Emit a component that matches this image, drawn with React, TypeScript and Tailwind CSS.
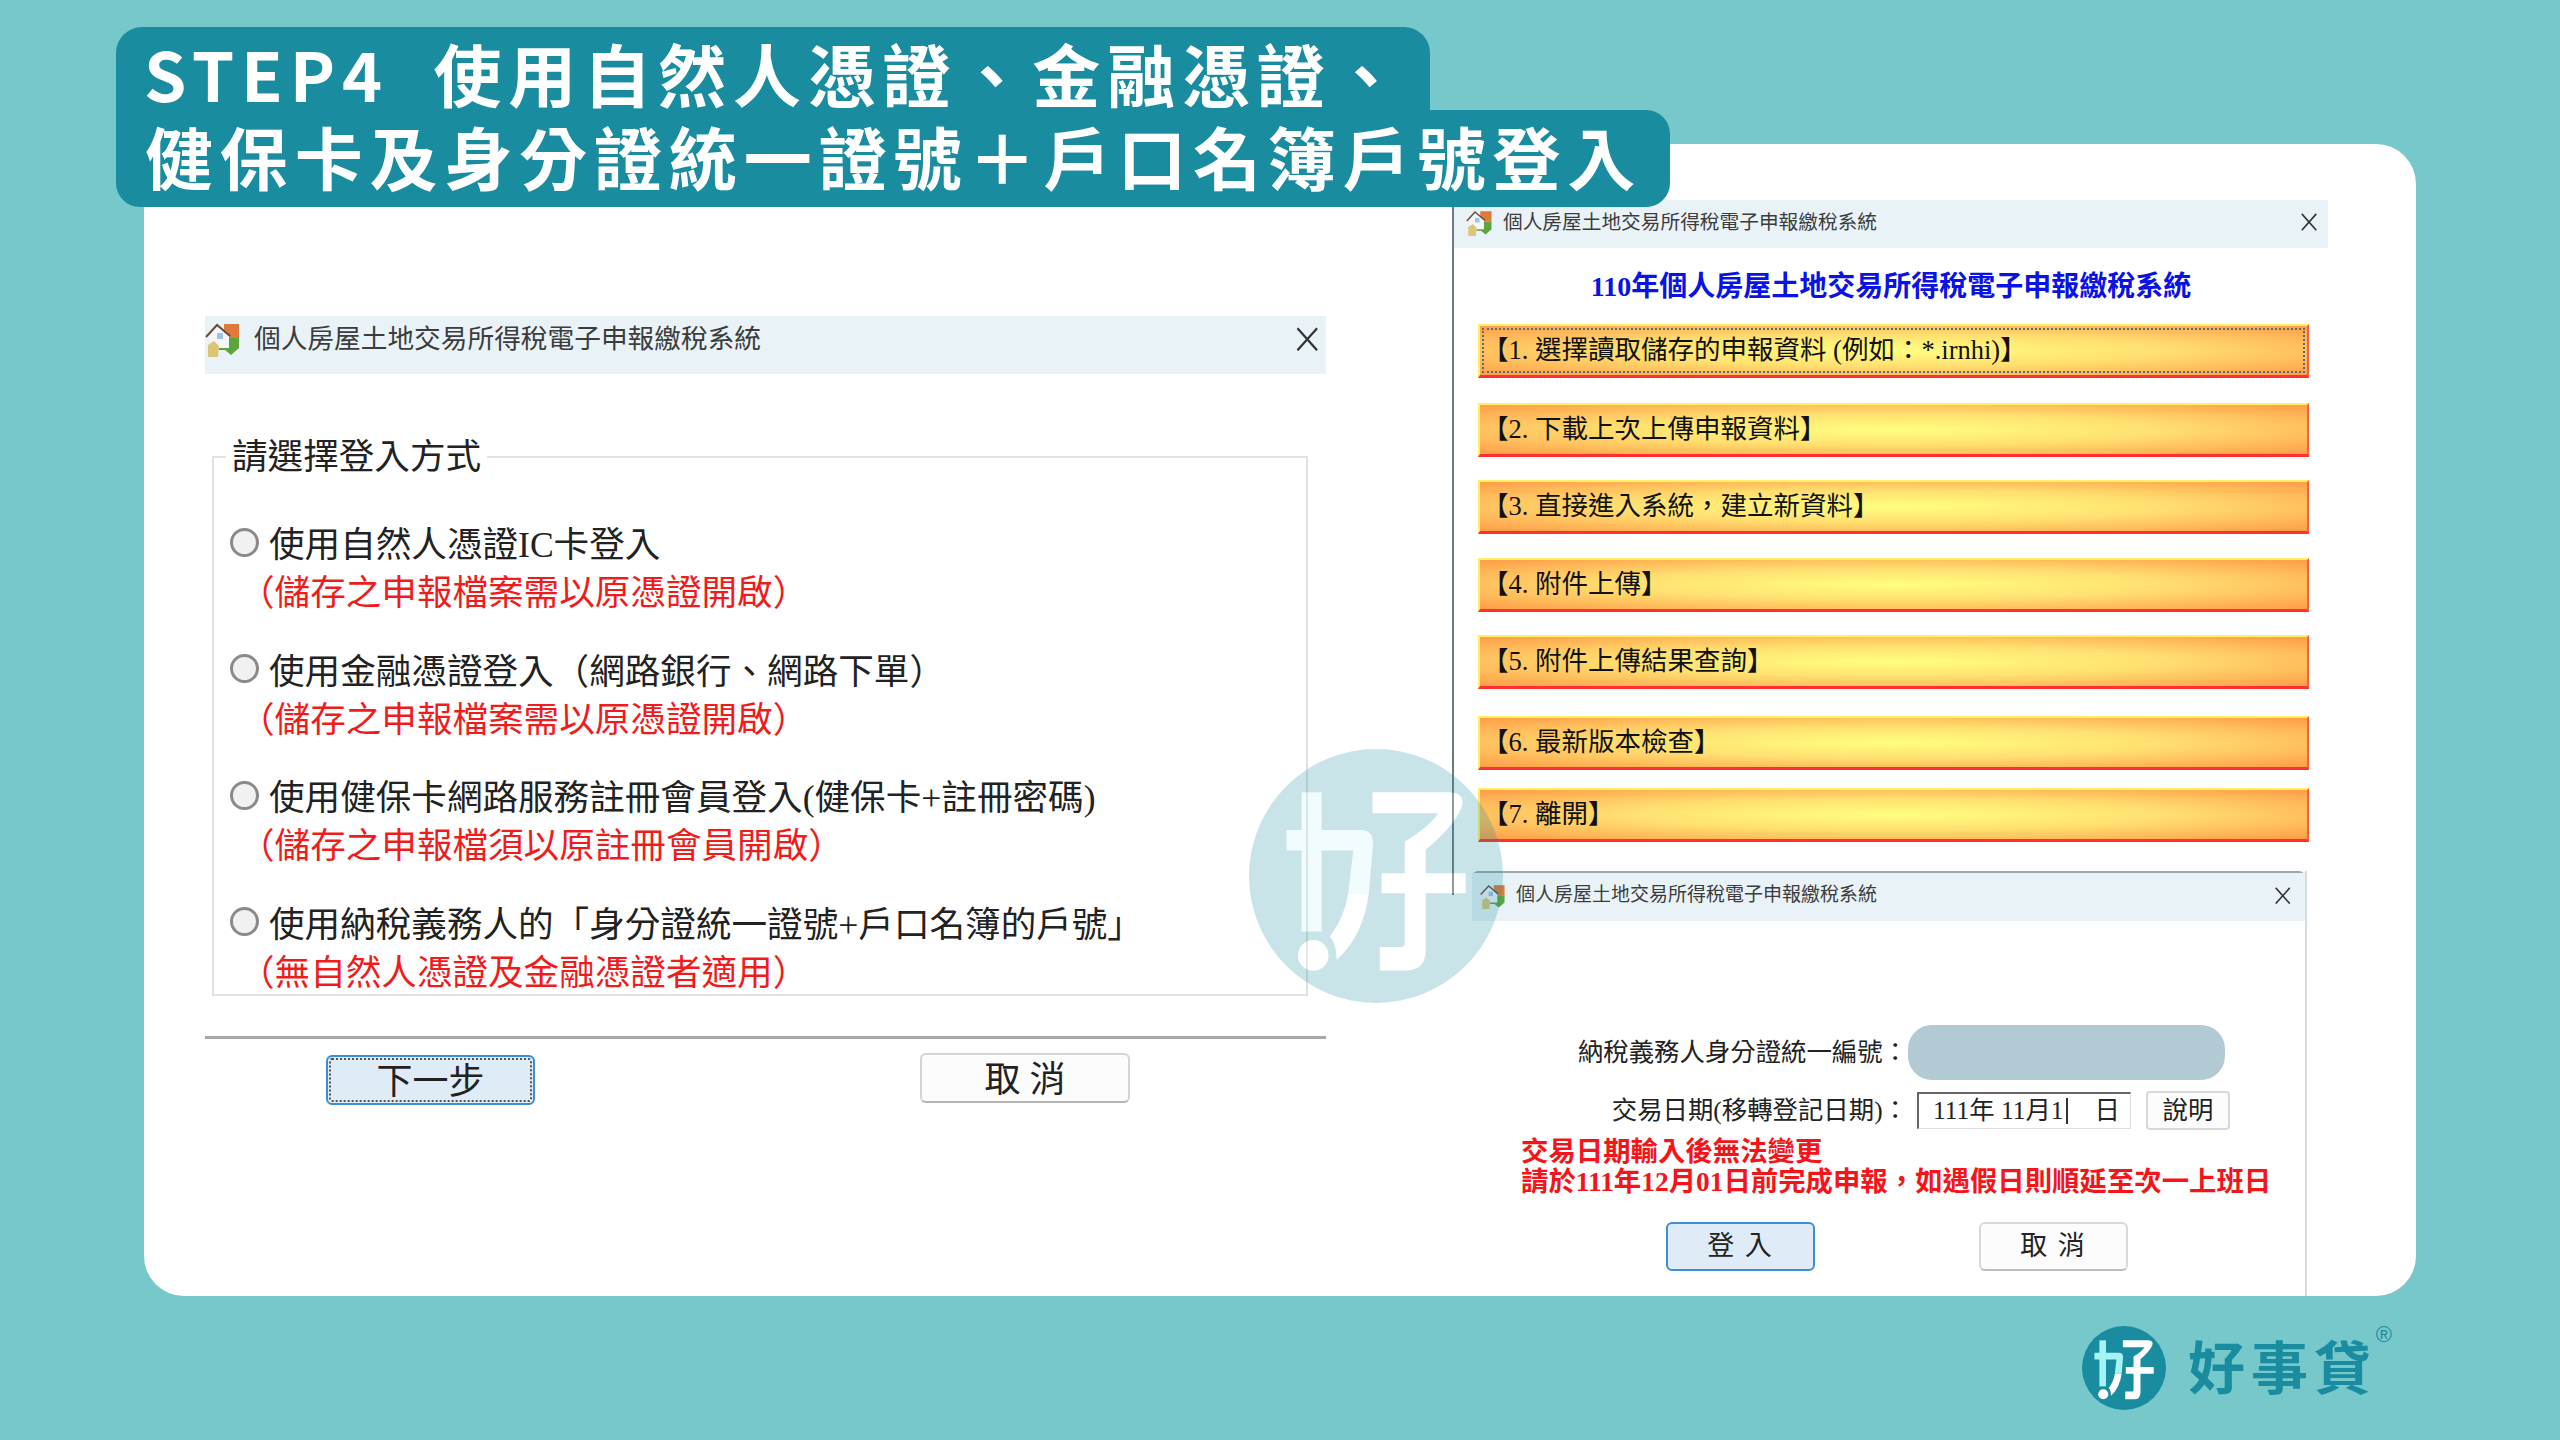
const SERIF = "[font-family:'Liberation_Serif','Noto_Sans_CJK_TC',serif]";

function HouseIcon({ size }: { size: number }) {
  return (
    <svg width={size} height={size} viewBox="0 0 36 36" className="shrink-0">
      <path d="M19 3H34V17H19Z" fill="#dd7a3c" />
      <path d="M14 17H34V27L26 34L20 29H14Z" fill="#5ba53a" />
      <path d="M4 15L13 6L24 15V27H7Z" fill="#f3f6fb" />
      <path d="M12 12H18V18H12Z" fill="#9cc4ea" />
      <path d="M1 16L12 4L25 15" fill="none" stroke="#6b4a3c" strokeWidth="2" />
      <path d="M3 24L9 20L14 25L13 36H3Z" fill="#dcc577" />
    </svg>
  );
}

function Haologo({ circle, stem, glyph }: { circle: string; stem: string; glyph: string }) {
  return (
    <svg viewBox="87 57 763 763" className="w-full h-full block">
      <circle cx="468.5" cy="438.5" r="381.5" fill={circle} />
      <rect x="245" y="187" width="60" height="418" fill={stem} />
      <path d="M200 300H420Q460 300 460 340L447 490H385L400 362H200Z" fill={stem} />
      <path d="M385 490Q375 560 330 620Q350 640 350 690Q430 620 447 490Z" fill={glyph} />
      <circle cx="280" cy="677" r="46" fill={glyph} />
      <path d="M458 187H690Q740 190 725 235Q700 290 618 360V430H738V490H618V660Q618 722 560 722H480V652H545Q555 652 555 640V490H485V430H555V335Q630 290 655 250H458Z" fill={glyph} />
    </svg>
  );
}

function TitleBar({ size, x, h, gap }: { size: number; x: string; h: string; gap: string }) {
  return (
    <div className={`flex items-center bg-[#e9f3f7] text-[#3c3c3c] ${h} ${gap}`} style={{ fontSize: size }}>
      <HouseIcon size={Math.round(size * 1.35)} />
      <span className="flex-1 whitespace-nowrap">個人房屋土地交易所得稅電子申報繳稅系統</span>
      <span className={x}>
        <svg width={size * 0.92} height={size * 0.92} viewBox="0 0 20 20" className="block">
          <path d="M2 1L18 19M18 1L2 19" stroke="#333" strokeWidth="1.8" fill="none" />
        </svg>
      </span>
    </div>
  );
}

const OPTIONS = [
  ["使用自然人憑證IC卡登入", "（儲存之申報檔案需以原憑證開啟）"],
  ["使用金融憑證登入（網路銀行、網路下單）", "（儲存之申報檔案需以原憑證開啟）"],
  ["使用健保卡網路服務註冊會員登入(健保卡+註冊密碼)", "（儲存之申報檔須以原註冊會員開啟）"],
  ["使用納稅義務人的「身分證統一證號+戶口名簿的戶號」", "（無自然人憑證及金融憑證者適用）"],
];

const MENU = [
  ["【1. 選擇讀取儲存的申報資料 (例如：*.irnhi)】", "mb-[25px]"],
  ["【2. 下載上次上傳申報資料】", "mb-[23px]"],
  ["【3. 直接進入系統，建立新資料】", "mb-[24px]"],
  ["【4. 附件上傳】", "mb-[23px]"],
  ["【5. 附件上傳結果查詢】", "mb-[27px]"],
  ["【6. 最新版本檢查】", "mb-[18px]"],
  ["【7. 離開】", "mb-[29px]"],
];

export default function App() {
  return (
    <div className={`relative w-[2560px] h-[1440px] overflow-hidden bg-[#76c8cb] pt-[144px] ${SERIF}`}>
      {/* Main white panel */}
      <main className="mx-[144px] h-[1152px] rounded-[40px] bg-white flex overflow-hidden">
        {/* Left dialog */}
        <section className="ml-[61px] mt-[172px] w-[1121px] shrink-0">
          <TitleBar size={26.7} x="mr-[6px]" h="h-[58px] pb-[12px]" gap="gap-[13px]" />
          <fieldset className="mt-[61px] ml-[7px] w-[1096px] h-[561px] border-2 border-[#e2e2e2]">
            <legend className="ml-[12px] px-[6px] text-[35.6px] leading-[44px] text-[#222] whitespace-nowrap">請選擇登入方式</legend>
            <div className="pt-[44px] pl-[16px]">
              {OPTIONS.map(([label, note]) => (
                <div key={label} className="h-[126.6px]">
                  <div className="flex items-center gap-[10px] h-[44px]">
                    <span className="w-[29px] h-[29px] -mt-[6px] rounded-full border-[3px] border-[#8a8a8a] bg-[#f1f1f1] shrink-0" />
                    <span className="text-[35.6px] leading-[44px] text-[#222] whitespace-nowrap">{label}</span>
                  </div>
                  <div className="mt-[4px] h-[44px] ml-[9px] text-[35.6px] leading-[44px] text-[#f01c1c] whitespace-nowrap">{note}</div>
                </div>
              ))}
            </div>
          </fieldset>
          <div className="mt-[40px] h-[3px] bg-[#a8a8a8]" />
          <div className="mt-[16px] flex items-start pl-[121px]">
            <button className="w-[209px] h-[50px] pt-[3px] rounded-[6px] border-2 border-[#3a8fd8] bg-[#dfecf8] outline-2 outline-dotted outline-[#555] -outline-offset-[5px] text-[36px] leading-none text-[#222]">下一步</button>
            <button className="ml-[385px] -mt-[2px] w-[210px] h-[50px] pt-[3px] rounded-[6px] border-2 border-[#d4d4d4] border-b-[#b5b5b5] bg-[#fcfcfc] text-[36px] leading-none text-[#222]">取 消</button>
          </div>
        </section>

        {/* Right dialogs */}
        <section className="ml-[126px] mt-[56px] w-[876px] shrink-0">
          <div className="h-[695px] -mb-[24px] border-l-2 border-[#6f7a80]">
            <TitleBar size={19.7} x="mr-[10px]" h="h-[48px] pb-[3px]" gap="gap-[10px] pl-[12px]" />
            <h1 className="mt-[22px] text-center text-[28px] leading-[34px] font-bold text-[#0a12e6] whitespace-nowrap">110年個人房屋土地交易所得稅電子申報繳稅系統</h1>
            <div className="mt-[20px] ml-[24px] w-[831px]">
              {MENU.map(([label, cls], i) => (
                <div key={label} className={`relative flex items-center h-[54px] pl-[2px] text-[26.5px] text-[#111] whitespace-nowrap border-t-2 border-l-2 border-[#fff066] border-b-[3px] border-r-2 border-b-[#ff3030] border-r-[#ff5a3a] bg-[radial-gradient(ellipse_at_center,#ffff80_0%,#ffe070_45%,#ff9c48_100%)] ${cls}`}>
                  {i === 0 && <span className="absolute inset-[2px] border-2 border-dotted border-[#5a6a80]" />}
                  {label}
                </div>
              ))}
            </div>
          </div>
          <div className="relative ml-[20px] w-[835px] h-[425px] border-r-2 border-[#d6dde0]">
            <div className="border-t-2 border-[#98abb3] rounded-t-[6px]">
              <TitleBar size={19} x="mr-[14px]" h="h-[48px] pb-[3px]" gap="gap-[10px] pl-[8px]" />
            </div>
            <div className="mt-[103px] flex items-center h-[56px] text-[25.4px] text-[#222]">
              <span className="w-[436px] text-right whitespace-nowrap">納稅義務人身分證統一編號：</span>
              <span className="w-[317px] h-[55px] rounded-[24px] bg-[#b2cad4]" />
            </div>
            <div className="mt-[10px] flex items-center h-[40px] text-[25.4px] text-[#222]">
              <span className="w-[436px] text-right whitespace-nowrap">交易日期(移轉登記日期)：</span>
              <span className="ml-[9px] w-[214px] h-[37px] flex items-center justify-between pl-[14px] pr-[10px] border-t-2 border-l-2 border-[#666] border-r border-b border-r-[#ddd] border-b-[#ddd] whitespace-pre">
                <span className="flex items-center">111年 11月1<i className="ml-[3px] w-[2px] h-[26px] bg-[#333]" /></span>
                <span>日</span>
              </span>
              <span className="ml-[15px] w-[84px] h-[39px] flex items-center justify-center rounded-[4px] border-2 border-[#d8d8d8] bg-[#fcfcfc]">說明</span>
            </div>
            <div className="mt-[7px] ml-[49px] text-[27.4px] leading-[30px] font-bold text-[#f5141a] whitespace-nowrap">
              <div>交易日期輸入後無法變更</div>
              <div>請於111年12月01日前完成申報，如遇假日則順延至次一上班日</div>
            </div>
            <div className="mt-[25px] ml-[194px] flex">
              <button className="w-[149px] h-[49px] rounded-[6px] border-2 border-[#3a8fd8] bg-[#dfecf8] text-[27px] tracking-[2px] leading-none text-[#222]">登 入</button>
              <button className="ml-[164px] w-[149px] h-[49px] rounded-[6px] border-2 border-[#d8d8d8] border-b-[#bbb] bg-[#fcfcfc] text-[27px] tracking-[2px] leading-none text-[#222]">取 消</button>
            </div>
          </div>
        </section>
      </main>

      {/* Footer logo */}
      <footer className="h-[144px] flex items-center justify-end pr-[167px] gap-[22px]">
        <div className="w-[84px] h-[84px]">
          <Haologo circle="#1a8c9f" stem="#a4f4f5" glyph="#ffffff" />
        </div>
        <div className="relative pr-[16px] pb-[8px] text-[57px] leading-[64px] tracking-[6px] font-bold text-[#1a8c9f] [font-family:'Noto_Sans_CJK_TC',sans-serif] whitespace-nowrap">
          好事貸
          <span className="absolute right-[1px] top-[-8px] text-[22px] leading-[22px] tracking-normal font-normal [font-family:'Liberation_Sans',sans-serif]">®</span>
        </div>
      </footer>

      {/* Heading tabs over the panel */}
      <header className="absolute left-[116px] top-[27px] text-white font-bold text-[68px] tracking-[6.85px] [font-family:'Noto_Sans_CJK_TC',sans-serif] whitespace-pre">
        <div className="w-[1314px] h-[83px] pl-[28px] flex items-center rounded-t-[26px] bg-[#1a8c9f]">
          <span className="leading-none pt-[9px]">STEP4  使用自然人憑證、金融憑證、</span>
        </div>
        <div className="w-[1554px] h-[97px] pl-[29px] flex items-center rounded-tr-[24px] rounded-b-[24px] bg-[#1a8c9f]">
          <span className="leading-none -mt-[6px]">健保卡及身分證統一證號＋戶口名簿戶號登入</span>
        </div>
      </header>

      {/* Watermark */}
      <div className="absolute left-[1249px] top-[749px] w-[254px] h-[254px] opacity-[0.23] pointer-events-none">
        <Haologo circle="#1a8c9f" stem="#c0f5f7" glyph="#ffffff" />
      </div>
    </div>
  );
}
